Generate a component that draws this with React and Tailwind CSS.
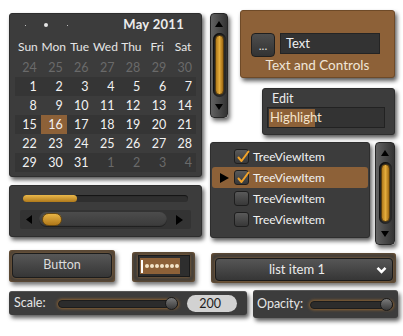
import React from 'react';

const panel = "bg-[#3c3c3c] rounded-[3px] border border-[#2e2e2e] shadow-[2px_3px_4px_rgba(0,0,0,0.65)]";

function Tri({ dir, w = 8, h = 6 }) {
  const d = {
    up: `M${w / 2} 0L${w} ${h}H0z`,
    down: `M0 0H${w}L${w / 2} ${h}z`,
    left: `M${w} 0V${h}L0 ${h / 2}z`,
    right: `M0 0L${w} ${h / 2}L0 ${h}z`,
  }[dir];
  return (
    <svg width={w} height={h} viewBox={`0 0 ${w} ${h}`} className="block">
      <path d={d} fill="#000" />
    </svg>
  );
}

function VScroll({ className }) {
  return (
    <div className={"flex flex-col items-center rounded-[4px] border border-[#262626] bg-gradient-to-r from-[#626262] via-[#4a4a4a] to-[#333333] shadow-[2px_3px_4px_rgba(0,0,0,0.6)] " + className}>
      <div className="h-[19px] flex items-center justify-center shrink-0"><Tri dir="up" /></div>
      <div className="flex-1 w-[13px] rounded-full bg-[#2a2a2a] shadow-[inset_1px_1px_2px_rgba(0,0,0,0.8)] p-[2px] flex">
        <div className="flex-1 rounded-full border border-[#5a3f10] bg-gradient-to-r from-[#b07a1c] via-[#e4ad3c] to-[#a06a12]" />
      </div>
      <div className="h-[20px] flex items-center justify-center shrink-0"><Tri dir="down" /></div>
    </div>
  );
}

function Check({ checked }) {
  return (
    <div className="w-[15px] h-[15px] rounded-[3px] border border-[#1e1e1e] bg-gradient-to-b from-[#5a5a5a] to-[#383838] flex items-center justify-center relative">
      {checked && (
        <svg width="15" height="15" viewBox="0 0 15 15" className="absolute left-[1px] top-[-1px]">
          <path d="M2.5 8.5L5.5 12L12.5 2.5" stroke="#f2a328" strokeWidth="2" fill="none" strokeLinecap="round" strokeLinejoin="round" />
        </svg>
      )}
    </div>
  );
}

function Calendar() {
  const rows = [];
  const prev = [24, 25, 26, 27, 28, 29, 30];
  rows.push(prev.map((n) => [n, false]));
  let d = 1;
  for (let r = 0; r < 5; r++) {
    const row = [];
    for (let c = 0; c < 7; c++) {
      if (d <= 31) row.push([d++, true]);
      else row.push([d++ - 31, false]);
    }
    rows.push(row);
  }
  const names = ["Sun", "Mon", "Tue", "Wed", "Thu", "Fri", "Sat"];
  return (
    <div className={panel + " h-[164px] flex flex-col px-[5px]"}>
      <div className="h-[22px] flex items-center shrink-0">
        <div className="w-[1px] h-[1px] bg-[#bdbdbd] ml-[10px]" />
        <div className="w-[4px] h-[4px] rounded-full bg-[#e6e6e6] ml-[18px]" />
        <div className="w-[1px] h-[1px] bg-[#bdbdbd] ml-[19px]" />
        <div className="ml-auto mr-[12px] font-bold text-[13px] text-[#ececec] tracking-[0.3px]">May 2011</div>
      </div>
      <div className="grid grid-cols-7 h-[21px] items-center shrink-0">
        {names.map((n) => (
          <div key={n} className="text-center text-[#e6e6e6] text-[12px]">{n}</div>
        ))}
      </div>
      <div className="mt-[1px] flex flex-col">
        {rows.map((row, i) => (
          <div key={i} className={"grid grid-cols-7 h-[19px] " + (i % 2 === 1 ? "bg-[#353535]" : "")}>
            {row.map(([n, cur], j) => (
              <div
                key={j}
                className={
                  "text-right pr-[4px] leading-[19px] text-[12.5px] " +
                  (cur ? "text-[#f2f2f2] " : "text-[#6a6a6a] ") +
                  (cur && n === 16 ? "bg-[#8d6138]" : "")
                }
              >
                {n}
              </div>
            ))}
          </div>
        ))}
      </div>
    </div>
  );
}

function SliderPanel() {
  return (
    <div className={panel + " h-[52px] mt-[8px] flex flex-col px-[10px] pt-[9px]"}>
      <div className="mx-[3px] h-[7px] rounded-full bg-[#2f2f2f] shadow-[inset_0_1px_1px_rgba(0,0,0,0.6)] flex">
        <div className="w-[54px] rounded-full bg-gradient-to-b from-[#eab84a] to-[#b07a1a]" />
      </div>
      <div className="mt-[8px] h-[19px] rounded-[2px] bg-[#333333] flex items-center px-[6px]">
        <Tri dir="left" w={6} h={9} />
        <div className="ml-[7px] w-[128px] h-[15px] rounded-full bg-gradient-to-b from-[#4c4c4c] to-[#3a3a3a] shadow-[inset_0_-1px_1px_rgba(0,0,0,0.5)] flex items-center pl-[3px]">
          <div className="w-[20px] h-[13px] rounded-full bg-gradient-to-b from-[#e8b445] to-[#b07818] border border-[#6a4a10]" />
        </div>
        <div className="ml-auto mr-[2px]"><Tri dir="right" w={7} h={10} /></div>
      </div>
    </div>
  );
}

function TextControls() {
  return (
    <div className="h-[68px] rounded-[3px] bg-[#8d6138] border border-[#6e4a28] shadow-[2px_3px_4px_rgba(0,0,0,0.65)] flex flex-col">
      <div className="flex items-start mt-[22px] ml-[10px]">
        <div className="w-[24px] h-[24px] rounded-[4px] border border-[#1f1f1f] bg-gradient-to-b from-[#4e4e4e] to-[#333333] text-[#e0e0e0] flex items-end justify-center pb-[4px] leading-none">...</div>
        <div className="ml-[5px] w-[100px] h-[21px] bg-[#333333] border border-[#242424] text-[#f0f0f0] pl-[5px] leading-[19px] text-[13px]">Text</div>
      </div>
      <div className="text-center text-[#f0e6d8] mt-[1px] leading-[14px] text-[13.5px]">Text and Controls</div>
    </div>
  );
}

function EditPanel() {
  return (
    <div className={panel + " h-[47px] w-[133px] ml-[22px] mt-[10px] flex flex-col"}>
      <div className="ml-[9px] mt-[2px] text-[#ececec] leading-[15px] text-[12.5px]">Edit</div>
      <div className="ml-[4px] mt-[1px] w-[118px] h-[21px] bg-[#333333] border border-[#222222] flex items-center pl-[1px]">
        <div className="h-[18px] w-[46px] bg-[#8d6138] flex items-center relative">
          <div className="w-[2px] h-[15px] bg-white mr-[1px]" />
          <span className="text-[#f4e4cc] text-[13px] leading-none">Highlight</span>
        </div>
      </div>
    </div>
  );
}

function Tree() {
  const items = [
    { checked: true, sel: false },
    { checked: true, sel: true },
    { checked: false, sel: false },
    { checked: false, sel: false },
  ];
  return (
    <div className={panel + " w-[160px] h-[96px] pt-[3px] px-[1px] flex flex-col"}>
      {items.map((it, i) => (
        <div key={i} className={"h-[21px] flex items-center rounded-[3px] " + (it.sel ? "bg-[#8d6138]" : "")}>
          <div className="w-[22px] flex justify-end pr-[5px]">
            {it.sel && <Tri dir="right" w={9} h={10} />}
          </div>
          <Check checked={it.checked} />
          <span className="ml-[4px] text-[#f2f2f2] text-[12px]">TreeViewItem</span>
        </div>
      ))}
    </div>
  );
}

function Track({ w }) {
  return (
    <div className={"relative h-[8px] rounded-full bg-[#2c2c2c] border border-[#1c1c1c] shadow-[0_0_3px_1px_#8a6030] " + w}>
      <div className="absolute top-[-4px] right-[-1px] w-[13px] h-[13px] rounded-full border border-[#1a1a1a] bg-gradient-to-b from-[#7a7a7a] to-[#3a3a3a]" />
    </div>
  );
}

export default function App() {
  return (
    <div className="w-[403px] h-[336px] bg-white overflow-hidden text-[12px] font-['Lato','Liberation_Sans',sans-serif]">
      <div className="flex pt-[10px] pl-[9px]">
        <div className="w-[193px] flex flex-col mt-[3px]">
          <Calendar />
          <SliderPanel />
        </div>
        <div className="ml-[8px] w-[187px] flex flex-col">
          <div className="flex h-[125px]">
            <VScroll className="mt-[3px] w-[18px] h-[105px]" />
            <div className="ml-[12px] w-[155px] flex flex-col">
              <TextControls />
              <EditPanel />
            </div>
          </div>
          <div className="flex mt-[7px]">
            <Tree />
            <VScroll className="ml-[5px] w-[20px] h-[103px]" />
          </div>
        </div>
      </div>

      <div className="flex mt-[5px] pl-[9px] items-start">
        <div className="w-[106px] h-[32px] rounded-[3px] bg-[#3a3a3a] shadow-[inset_0_0_4px_#8a5f30,2px_3px_4px_rgba(0,0,0,0.55)] p-[3px]">
          <div className="h-[25px] rounded-[4px] border border-[#1c1c1c] bg-gradient-to-b from-[#575757] to-[#363636] shadow-[0_0_3px_#a0703a] text-[#dcdcdc] flex items-center justify-center text-[12.5px]">
            Button
          </div>
        </div>
        <div className="ml-[17px] mt-[2px] w-[63px] h-[30px] rounded-[3px] bg-[#3a3a3a] shadow-[inset_0_0_4px_#8a5f30,2px_3px_4px_rgba(0,0,0,0.55)] pt-[3px] pl-[6px]">
          <div className="w-[52px] h-[22px] bg-[#2e2e2e] border border-[#1a1a1a] shadow-[0_0_3px_#a0703a] flex items-center pl-[1px]">
            <div className="w-[40px] h-[16px] bg-[#8d6138] flex items-center gap-[1px] pl-[1px]">
              <div className="w-[2px] h-[13px] bg-white mr-[1px]" />
              {[0, 1, 2, 3, 4, 5, 6].map((k) => (
                <div key={k} className="w-[4px] h-[4px] rounded-full bg-[#f4e4c8]" />
              ))}
            </div>
          </div>
        </div>
        <div className="ml-[16px] mt-[3px] w-[185px] h-[30px] rounded-[3px] bg-[#3a3a3a] shadow-[inset_0_0_4px_#8a5f30,2px_3px_4px_rgba(0,0,0,0.55)] pt-[5px] pl-[4px]">
          <div className="w-[178px] h-[23px] rounded-[4px] border border-[#1a1a1a] bg-gradient-to-b from-[#565656] to-[#363636] shadow-[0_0_3px_#a0703a] flex items-center">
            <span className="flex-1 text-center text-[#ececec] text-[13px] pl-[2px]">list item 1</span>
            <svg width="11" height="8" viewBox="0 0 11 8" className="mr-[5px]">
              <path d="M1.5 1.8L5.5 5.8L9.5 1.8" stroke="#fff" strokeWidth="2.6" fill="none" />
            </svg>
          </div>
        </div>
      </div>

      <div className="flex mt-[7px] pl-[9px] items-start">
        <div className="mt-[1px] w-[238px] h-[24px] rounded-[3px] bg-[#3c3c3c] border-t border-[#555] shadow-[2px_3px_4px_rgba(0,0,0,0.65)] flex items-center pl-[5px]">
          <span className="text-[#e6e6e6] w-[44px] text-[12.5px]">Scale:</span>
          <Track w="w-[120px]" />
          <div className="ml-[9px] w-[50px] h-[17px] rounded-full bg-[#d2d2d2] text-[#1e1e1e] text-right pr-[16px] leading-[17px] text-[12.5px]">200</div>
        </div>
        <div className="ml-[6px] w-[145px] h-[28px] rounded-[3px] bg-[#3c3c3c] border-t border-[#555] shadow-[2px_3px_4px_rgba(0,0,0,0.65)] flex items-center pl-[4px]">
          <span className="text-[#e6e6e6] w-[53px] text-[12.5px]">Opacity:</span>
          <Track w="w-[83px]" />
        </div>
      </div>
    </div>
  );
}
